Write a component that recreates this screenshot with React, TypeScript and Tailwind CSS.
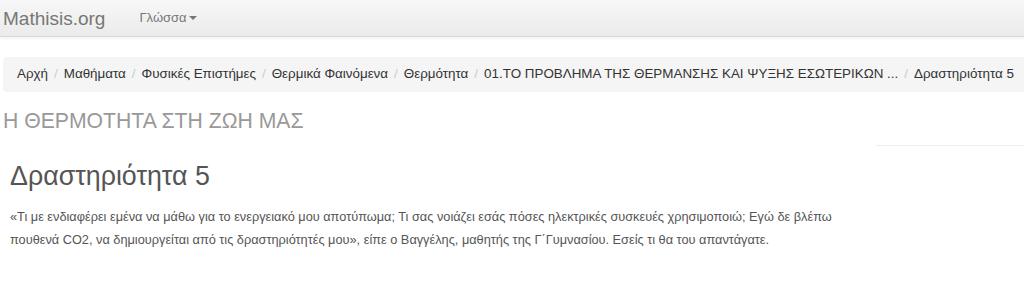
import React from "react";

const crumbs = [
  "Αρχή",
  "Μαθήματα",
  "Φυσικές Επιστήμες",
  "Θερμικά Φαινόμενα",
  "Θερμότητα",
  "01.ΤΟ ΠΡΟΒΛΗΜΑ ΤΗΣ ΘΕΡΜΑΝΣΗΣ ΚΑΙ ΨΥΞΗΣ ΕΣΩΤΕΡΙΚΩΝ ...",
];

export default function App() {
  return (
    <div
      className="w-[1024px] h-[284px] overflow-hidden bg-white"
      style={{ fontFamily: '"Liberation Sans", Arial, sans-serif' }}
    >
      <nav className="h-[37px] flex items-center bg-gradient-to-b from-[#f7f7f7] to-[#ebebeb] border-b border-[#d9d9d9] shadow-[0_1px_4px_rgba(0,0,0,0.08)]">
        <span className="pl-[3px] text-[19px] leading-none text-[#777]">Mathisis.org</span>
        <span className="ml-[34px] flex items-center text-[13px] text-[#777]">
          Γλώσσα
          <span className="ml-[2px] inline-block w-0 h-0 border-l-[4px] border-r-[4px] border-t-[4px] border-l-transparent border-r-transparent border-t-[#777]" />
        </span>
      </nav>

      <div className="pl-[3px] pt-[20px]">
        <ol className="w-[1040px] h-[35px] flex items-center px-[14px] bg-[#f5f5f5] rounded-[4px] text-[13.4px] text-[#333] whitespace-nowrap">
          {crumbs.map((c) => (
            <li key={c} className="flex items-center">
              <span>{c}</span>
              <span className="px-[6px] text-[#ccc]">/</span>
            </li>
          ))}
          <li className="text-[#333]">Δραστηριότητα 5</li>
        </ol>

        <h3 className="mt-[18px] text-[21.2px] leading-[22px] text-[#999]">
          Η ΘΕΡΜΟΤΗΤΑ ΣΤΗ ΖΩΗ ΜΑΣ
        </h3>

        <div className="flex">
          <div className="flex-1 pl-[7px] pt-[29px]">
            <h2 className="text-[26.8px] leading-[30px] text-[#555]">Δραστηριότητα 5</h2>
            <p className="mt-[14px] w-[840px] text-[12.75px] leading-[23px] text-[#555]">
              «Τι με ενδιαφέρει εμένα να μάθω για το ενεργειακό μου αποτύπωμα; Τι σας νοιάζει εσάς πόσες ηλεκτρικές συσκευές χρησιμοποιώ; Εγώ δε βλέπω πουθενά CO2, να δημιουργείται από τις δραστηριότητές μου», είπε ο Βαγγέλης, μαθητής της Γ΄Γυμνασίου. Εσείς τι θα του απαντάγατε.
            </p>
          </div>
          <div className="w-[148px] mt-[13px] border-t border-[#eeeeee] self-start" />
        </div>
      </div>
    </div>
  );
}
